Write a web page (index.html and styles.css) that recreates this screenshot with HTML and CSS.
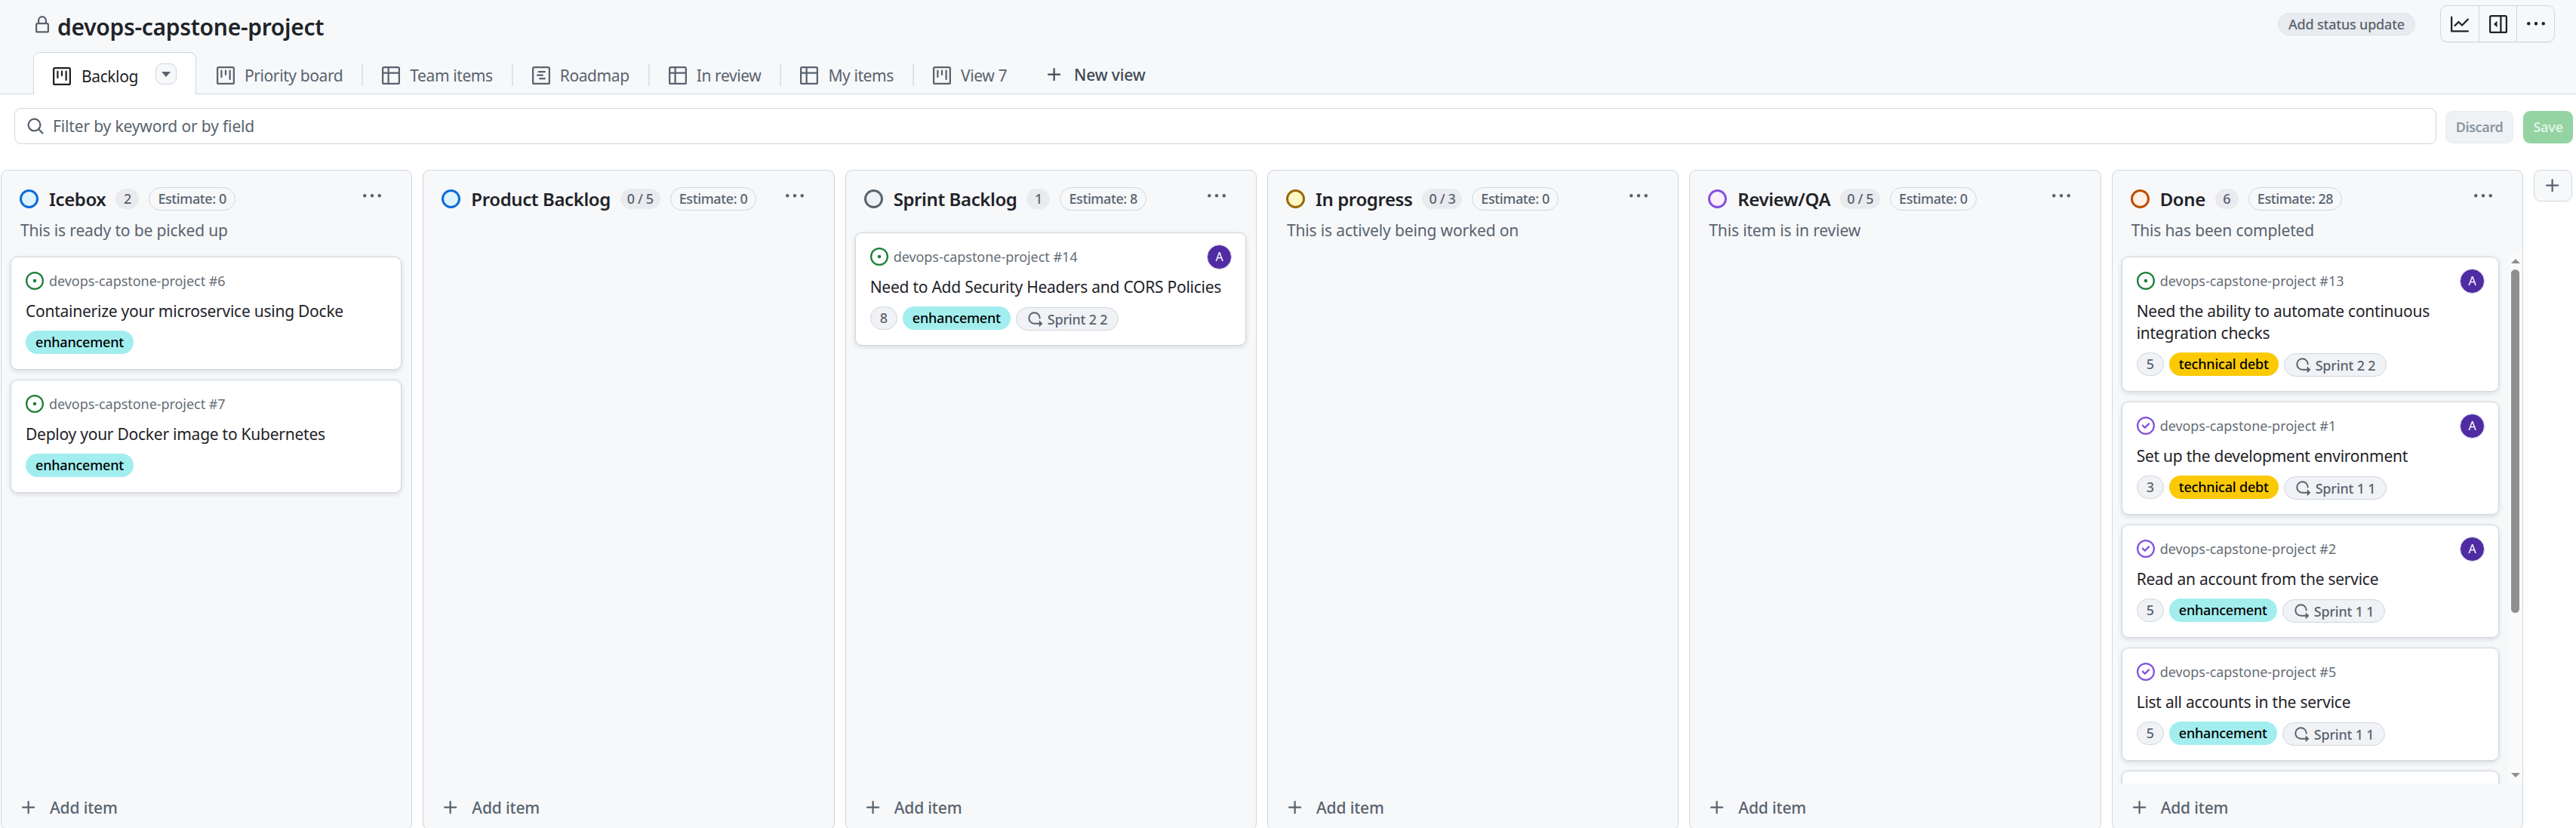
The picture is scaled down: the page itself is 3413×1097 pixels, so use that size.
FILE: index.html
```html
<!DOCTYPE html>
<html lang="en">
<head>
  <meta charset="UTF-8">
  <title>devops-capstone-project</title>
  <link rel="stylesheet" href="styles.css">
</head>
<body>

<svg class="sprite" xmlns="http://www.w3.org/2000/svg">
  <symbol id="i-lock" viewBox="0 0 16 16"><path d="M4 4a4 4 0 0 1 8 0v2h.25c.966 0 1.75.784 1.75 1.75v5.5A1.75 1.75 0 0 1 12.25 15h-8.5A1.75 1.75 0 0 1 2 13.25v-5.5C2 6.784 2.784 6 3.75 6H4Zm8.25 3.5h-8.5a.25.25 0 0 0-.25.25v5.5c0 .138.112.25.25.25h8.5a.25.25 0 0 0 .25-.25v-5.5a.25.25 0 0 0-.25-.25ZM10.5 6V4a2.5 2.5 0 1 0-5 0v2Z"/></symbol>
  <symbol id="i-board" viewBox="0 0 16 16"><path d="M1.75 0h12.5C15.216 0 16 .784 16 1.75v12.5A1.75 1.75 0 0 1 14.25 16H1.75A1.75 1.75 0 0 1 0 14.25V1.75C0 .784.784 0 1.75 0ZM1.5 1.75v12.5c0 .138.112.25.25.25h12.5a.25.25 0 0 0 .25-.25V1.75a.25.25 0 0 0-.25-.25H1.75a.25.25 0 0 0-.25.25ZM11.75 3a.75.75 0 0 1 .75.75v7.5a.75.75 0 0 1-1.5 0v-7.5a.75.75 0 0 1 .75-.75Zm-8.25.75a.75.75 0 0 1 1.5 0v5.5a.75.75 0 0 1-1.5 0ZM8 3a.75.75 0 0 1 .75.75v3.5a.75.75 0 0 1-1.5 0v-3.5A.75.75 0 0 1 8 3Z"/></symbol>
  <symbol id="i-table" viewBox="0 0 16 16"><path d="M0 1.75C0 .784.784 0 1.75 0h12.5C15.216 0 16 .784 16 1.75v12.5A1.75 1.75 0 0 1 14.25 16H1.75A1.75 1.75 0 0 1 0 14.25ZM6.5 6.5v8h7.75a.25.25 0 0 0 .25-.25V6.5Zm8-1.5V1.75a.25.25 0 0 0-.25-.25H6.5V5Zm-13 1.5v7.75c0 .138.112.25.25.25H5v-8ZM5 5V1.5H1.75a.25.25 0 0 0-.25.25V5Z"/></symbol>
  <symbol id="i-roadmap" viewBox="0 0 16 16"><path d="M4.75 7a.75.75 0 0 0 0 1.5h4.5a.75.75 0 0 0 0-1.5h-4.5ZM5 4.75A.75.75 0 0 1 5.75 4h5.5a.75.75 0 0 1 0 1.5h-5.5A.75.75 0 0 1 5 4.75ZM6.75 10a.75.75 0 0 0 0 1.5h4.5a.75.75 0 0 0 0-1.5h-4.5Z"/><path d="M0 1.75C0 .784.784 0 1.75 0h12.5C15.216 0 16 .784 16 1.75v12.5A1.75 1.75 0 0 1 14.25 16H1.75A1.75 1.75 0 0 1 0 14.25Zm1.75-.25a.25.25 0 0 0-.25.25v12.5c0 .138.112.25.25.25h12.5a.25.25 0 0 0 .25-.25V1.75a.25.25 0 0 0-.25-.25Z"/></symbol>
  <symbol id="i-search" viewBox="0 0 16 16"><path d="M10.68 11.74a6 6 0 0 1-7.922-8.982 6 6 0 0 1 8.982 7.922l3.04 3.04a.749.749 0 0 1-.326 1.275.749.749 0 0 1-.734-.215ZM11.5 7a4.499 4.499 0 1 0-8.997 0A4.499 4.499 0 0 0 11.5 7Z"/></symbol>
  <symbol id="i-plus" viewBox="0 0 16 16"><path d="M7.75 2a.75.75 0 0 1 .75.75V7h4.25a.75.75 0 0 1 0 1.5H8.5v4.25a.75.75 0 0 1-1.5 0V8.5H2.75a.75.75 0 0 1 0-1.5H7V2.75A.75.75 0 0 1 7.75 2Z"/></symbol>
  <symbol id="i-kebab" viewBox="0 0 16 16"><path d="M8 9a1.5 1.5 0 1 0 0-3 1.5 1.5 0 0 0 0 3ZM1.5 9a1.5 1.5 0 1 0 0-3 1.5 1.5 0 0 0 0 3Zm13 0a1.5 1.5 0 1 0 0-3 1.5 1.5 0 0 0 0 3Z"/></symbol>
  <symbol id="i-graph" viewBox="0 0 16 16"><path d="M1.5 1.75V13.5h13.75a.75.75 0 0 1 0 1.5H.75a.75.75 0 0 1-.75-.75V1.75a.75.75 0 0 1 1.5 0Zm14.28 2.53-5.25 5.25a.75.75 0 0 1-1.06 0L7 7.06 4.28 9.78a.751.751 0 0 1-1.042-.018.751.751 0 0 1-.018-1.042l3.25-3.25a.75.75 0 0 1 1.06 0L10 7.94l4.72-4.72a.751.751 0 0 1 1.042.018.751.751 0 0 1 .018 1.042Z"/></symbol>
  <symbol id="i-sidebar" viewBox="0 0 16 16"><path d="m4.177 7.823 2.396-2.396A.25.25 0 0 1 7 5.604v4.792a.25.25 0 0 1-.427.177L4.177 8.177a.25.25 0 0 1 0-.354Z"/><path d="M0 1.75C0 .784.784 0 1.75 0h12.5C15.216 0 16 .784 16 1.75v12.5A1.75 1.75 0 0 1 14.25 16H1.75A1.75 1.75 0 0 1 0 14.25Zm1.75-.25a.25.25 0 0 0-.25.25v12.5c0 .138.112.25.25.25H9.5v-13Zm12.5 13a.25.25 0 0 0 .25-.25V1.75a.25.25 0 0 0-.25-.25H11v13Z"/></symbol>
  <symbol id="i-open" viewBox="0 0 16 16"><path d="M8 9.5a1.5 1.5 0 1 0 0-3 1.5 1.5 0 0 0 0 3Z"/><path d="M8 0a8 8 0 1 1 0 16A8 8 0 0 1 8 0ZM1.5 8a6.5 6.5 0 1 0 13 0 6.5 6.5 0 0 0-13 0Z"/></symbol>
  <symbol id="i-closed" viewBox="0 0 16 16"><path d="M11.28 6.78a.75.75 0 0 0-1.06-1.06L7.25 8.69 5.78 7.22a.75.75 0 0 0-1.06 1.06l2 2a.75.75 0 0 0 1.06 0l3.5-3.5Z"/><path d="M16 8A8 8 0 1 1 0 8a8 8 0 0 1 16 0Zm-1.5 0a6.5 6.5 0 1 0-13 0 6.5 6.5 0 0 0 13 0Z"/></symbol>
  <symbol id="i-iteration" viewBox="0 0 16 16"><path d="M2.5 7.25a4.75 4.75 0 0 1 9.5 0 .75.75 0 0 0 1.5 0 6.25 6.25 0 1 0-6.25 6.25H12v2.146c0 .223.27.335.427.177l2.896-2.896a.25.25 0 0 0 0-.354l-2.896-2.896a.25.25 0 0 0-.427.177V12H7.25A4.75 4.75 0 0 1 2.5 7.25Z"/></symbol>
</svg>

<header class="page-head">
  <div class="title-row">
    <svg class="icon lock"><use href="#i-lock"/></svg>
    <h1>devops-capstone-project</h1>
    <button class="status-btn">Add status update</button>
    <div class="tool-group">
      <span class="tool"><svg class="icon"><use href="#i-graph"/></svg></span>
      <span class="tool"><svg class="icon"><use href="#i-sidebar"/></svg></span>
      <span class="tool"><svg class="icon"><use href="#i-kebab"/></svg></span>
    </div>
  </div>
  <nav class="tabs">
    <a class="tab active"><svg class="icon"><use href="#i-board"/></svg>Backlog<span class="tab-menu"><i class="caret"></i></span></a>
    <a class="tab"><svg class="icon"><use href="#i-board"/></svg>Priority board</a>
    <span class="tab-sep"></span>
    <a class="tab"><svg class="icon"><use href="#i-table"/></svg>Team items</a>
    <span class="tab-sep"></span>
    <a class="tab"><svg class="icon"><use href="#i-roadmap"/></svg>Roadmap</a>
    <span class="tab-sep"></span>
    <a class="tab"><svg class="icon"><use href="#i-table"/></svg>In review</a>
    <span class="tab-sep"></span>
    <a class="tab"><svg class="icon"><use href="#i-table"/></svg>My items</a>
    <span class="tab-sep"></span>
    <a class="tab"><svg class="icon"><use href="#i-board"/></svg>View 7</a>
    <a class="new-view"><svg class="icon"><use href="#i-plus"/></svg>New view</a>
  </nav>
</header>

<div class="filter-row">
  <div class="filter">
    <svg class="icon"><use href="#i-search"/></svg>
    <span>Filter by keyword or by field</span>
  </div>
  <button class="btn-discard">Discard</button>
  <button class="btn-save">Save</button>
</div>

<main class="board">

  <section class="column">
    <div class="col-head">
      <div class="col-title">
        <span class="dot blue"></span>
        <h2>Icebox</h2>
        <span class="count">2</span>
        <span class="estimate">Estimate: 0</span>
        <svg class="icon col-menu"><use href="#i-kebab"/></svg>
      </div>
      <p class="col-desc">This is ready to be picked up</p>
    </div>
    <div class="col-body">
      <div class="cards">
        <article class="card">
          <div class="card-top"><svg class="icon open"><use href="#i-open"/></svg><span>devops-capstone-project #6</span></div>
          <h3>Containerize your microservice using Docke</h3>
          <div class="tags"><span class="label enh">enhancement</span></div>
        </article>
        <article class="card">
          <div class="card-top"><svg class="icon open"><use href="#i-open"/></svg><span>devops-capstone-project #7</span></div>
          <h3>Deploy your Docker image to Kubernetes</h3>
          <div class="tags"><span class="label enh">enhancement</span></div>
        </article>
      </div>
    </div>
    <div class="add-item"><svg class="icon"><use href="#i-plus"/></svg>Add item</div>
  </section>

  <section class="column">
    <div class="col-head short">
      <div class="col-title">
        <span class="dot blue"></span>
        <h2>Product Backlog</h2>
        <span class="count">0 / 5</span>
        <span class="estimate">Estimate: 0</span>
        <svg class="icon col-menu"><use href="#i-kebab"/></svg>
      </div>
    </div>
    <div class="col-body"></div>
    <div class="add-item"><svg class="icon"><use href="#i-plus"/></svg>Add item</div>
  </section>

  <section class="column">
    <div class="col-head short">
      <div class="col-title">
        <span class="dot gray"></span>
        <h2>Sprint Backlog</h2>
        <span class="count">1</span>
        <span class="estimate">Estimate: 8</span>
        <svg class="icon col-menu"><use href="#i-kebab"/></svg>
      </div>
    </div>
    <div class="col-body">
      <div class="cards">
        <article class="card">
          <div class="card-top"><svg class="icon open"><use href="#i-open"/></svg><span>devops-capstone-project #14</span><b class="avatar">A</b></div>
          <h3>Need to Add Security Headers and CORS Policies</h3>
          <div class="tags">
            <span class="points">8</span>
            <span class="label enh">enhancement</span>
            <span class="sprint"><svg class="icon"><use href="#i-iteration"/></svg>Sprint 2 2</span>
          </div>
        </article>
      </div>
    </div>
    <div class="add-item"><svg class="icon"><use href="#i-plus"/></svg>Add item</div>
  </section>

  <section class="column">
    <div class="col-head">
      <div class="col-title">
        <span class="dot yellow"></span>
        <h2>In progress</h2>
        <span class="count">0 / 3</span>
        <span class="estimate">Estimate: 0</span>
        <svg class="icon col-menu"><use href="#i-kebab"/></svg>
      </div>
      <p class="col-desc">This is actively being worked on</p>
    </div>
    <div class="col-body"></div>
    <div class="add-item"><svg class="icon"><use href="#i-plus"/></svg>Add item</div>
  </section>

  <section class="column">
    <div class="col-head">
      <div class="col-title">
        <span class="dot purple"></span>
        <h2>Review/QA</h2>
        <span class="count">0 / 5</span>
        <span class="estimate">Estimate: 0</span>
        <svg class="icon col-menu"><use href="#i-kebab"/></svg>
      </div>
      <p class="col-desc">This item is in review</p>
    </div>
    <div class="col-body"></div>
    <div class="add-item"><svg class="icon"><use href="#i-plus"/></svg>Add item</div>
  </section>

  <section class="column">
    <div class="col-head">
      <div class="col-title">
        <span class="dot orange"></span>
        <h2>Done</h2>
        <span class="count">6</span>
        <span class="estimate">Estimate: 28</span>
        <svg class="icon col-menu"><use href="#i-kebab"/></svg>
      </div>
      <p class="col-desc">This has been completed</p>
    </div>
    <div class="col-body">
      <div class="cards">
        <article class="card">
          <div class="card-top"><svg class="icon open"><use href="#i-open"/></svg><span>devops-capstone-project #13</span><b class="avatar">A</b></div>
          <h3>Need the ability to automate continuous integration checks</h3>
          <div class="tags">
            <span class="points">5</span>
            <span class="label debt">technical debt</span>
            <span class="sprint"><svg class="icon"><use href="#i-iteration"/></svg>Sprint 2 2</span>
          </div>
        </article>
        <article class="card">
          <div class="card-top"><svg class="icon closed"><use href="#i-closed"/></svg><span>devops-capstone-project #1</span><b class="avatar">A</b></div>
          <h3>Set up the development environment</h3>
          <div class="tags">
            <span class="points">3</span>
            <span class="label debt">technical debt</span>
            <span class="sprint"><svg class="icon"><use href="#i-iteration"/></svg>Sprint 1 1</span>
          </div>
        </article>
        <article class="card">
          <div class="card-top"><svg class="icon closed"><use href="#i-closed"/></svg><span>devops-capstone-project #2</span><b class="avatar">A</b></div>
          <h3>Read an account from the service</h3>
          <div class="tags">
            <span class="points">5</span>
            <span class="label enh">enhancement</span>
            <span class="sprint"><svg class="icon"><use href="#i-iteration"/></svg>Sprint 1 1</span>
          </div>
        </article>
        <article class="card">
          <div class="card-top"><svg class="icon closed"><use href="#i-closed"/></svg><span>devops-capstone-project #5</span></div>
          <h3>List all accounts in the service</h3>
          <div class="tags">
            <span class="points">5</span>
            <span class="label enh">enhancement</span>
            <span class="sprint"><svg class="icon"><use href="#i-iteration"/></svg>Sprint 1 1</span>
          </div>
        </article>
        <article class="card card-cut"></article>
      </div>
      <div class="scrollbar">
        <i class="arrow-up"></i>
        <span class="thumb"></span>
        <i class="arrow-down"></i>
      </div>
    </div>
    <div class="add-item"><svg class="icon"><use href="#i-plus"/></svg>Add item</div>
  </section>

  <button class="add-col"><svg class="icon"><use href="#i-plus"/></svg></button>

</main>

</body>
</html>
```

FILE: styles.css
```css
* {
  box-sizing: border-box;
}
html, body {
  height: 100%;
}
body {
  margin: 0;
  overflow: hidden;
  background-color: #fff;
  color: #1f2328;
  font-family: "Noto Sans", sans-serif;
  font-size: 21px;
  letter-spacing: -0.15px;
}
button {
  font-family: inherit;
  letter-spacing: -0.4px;
}
h1, h2, h3, p {
  margin: 0;
}
.sprite {
  display: none;
}
.icon {
  width: 24px;
  height: 24px;
  flex-shrink: 0;
  fill: currentColor;
}

/* header */
.page-head {
  height: 125px;
  background-color: #f6f8fa;
  border-bottom: 1px solid #d0d7de;
}
.title-row {
  display: flex;
  align-items: center;
  height: 69px;
  padding: 7px 28px 13px 44px;
}
.lock {
  width: 24px;
  height: 24px;
  color: #59636e;
  margin: 3px 8px 0 0;
}
h1 {
  font-size: 30px;
  font-weight: 600;
  line-height: 44px;
  margin-top: 9px;
  letter-spacing: -0.3px;
}
.status-btn {
  margin-left: auto;
  height: 30px;
  padding: 0 13px;
  border: 1px solid #dfe3e8;
  border-radius: 15px;
  background-color: #e8ebef;
  color: #59636e;
  font-size: 18px;
  font-weight: 500;
  letter-spacing: -0.2px;
}
.tool-group {
  display: flex;
  margin-left: 33px;
  height: 49px;
  border: 1px solid #d0d7de;
  border-radius: 9px;
  box-shadow: 0 1px 0 rgba(31, 35, 40, 0.05);
}
.tool {
  display: flex;
  align-items: center;
  justify-content: center;
  width: 50px;
  border-left: 1px solid #d0d7de;
}
.tool:first-child {
  border-left: none;
}

/* view tabs */
.tabs {
  display: flex;
  align-items: center;
  height: 55px;
  margin-left: 44px;
}
.tab {
  display: flex;
  align-items: center;
  gap: 13px;
  height: 100%;
  padding: 6px 25px 0;
  color: #59636e;
  letter-spacing: -0.4px;
}
.tab.active {
  gap: 14px;
  height: 56px;
  margin: 1px 2px 0 0;
  background-color: #fff;
  color: #1f2328;
  border: 1px solid #d0d7de;
  border-bottom: none;
  border-radius: 9px 9px 0 0;
}
.tab-sep {
  width: 2px;
  height: 30px;
  margin-top: 4px;
  background-color: #dfe3e8;
}
.tab-menu {
  display: flex;
  align-items: center;
  justify-content: center;
  width: 28px;
  height: 28px;
  margin: -5px 0 0 9px;
  border: 1px solid #d0d7de;
  border-radius: 9px;
  background-color: #f6f8fa;
}
.caret {
  border-top: 7px solid #59636e;
  border-left: 6px solid transparent;
  border-right: 6px solid transparent;
}
.new-view {
  display: flex;
  align-items: center;
  gap: 14px;
  margin: 4px 0 0 26px;
  color: #424a53;
  font-weight: 500;
}

/* filter bar */
.filter-row {
  display: flex;
  align-items: center;
  height: 100px;
  padding: 0 4px 17px 19px;
}
.filter {
  display: flex;
  align-items: center;
  gap: 11px;
  flex: 1;
  height: 48px;
  padding-left: 15px;
  border: 1px solid #d0d7de;
  border-radius: 9px;
  color: #59636e;
}
.btn-discard, .btn-save {
  height: 43px;
  margin-top: 3px;
  border-radius: 9px;
  font-size: 18px;
  font-weight: 600;
}
.btn-discard {
  width: 90px;
  margin-left: 12px;
  border: 1px solid #e7eaee;
  background-color: #eff2f5;
  color: #8c959f;
}
.btn-save {
  width: 66px;
  margin-left: 13px;
  border: none;
  background-color: #94d3a2;
  color: #dff3e4;
}

/* board */
.board {
  display: flex;
  gap: 14px;
  padding-left: 1px;
  height: 875px;
}
.column {
  display: flex;
  flex-direction: column;
  flex: 1;
  min-width: 0;
  background-color: #f6f8fa;
  border: 1px solid #d0d7de;
  border-radius: 9px;
}
.col-head {
  height: 108px;
  padding: 22px 25px 0 24px;
}
.col-head.short {
  height: 76px;
}
.col-title {
  display: flex;
  align-items: center;
  height: 31px;
}
.dot {
  width: 25px;
  height: 25px;
  flex-shrink: 0;
  margin-right: 14px;
  border: 3px solid;
  border-radius: 50%;
}
.dot.blue { border-color: #0969da; background-color: #ddf4ff; }
.dot.gray { border-color: #59636e; background-color: #eff2f5; }
.dot.yellow { border-color: #9a6700; background-color: #fff8c5; }
.dot.purple { border-color: #8250df; background-color: #fbefff; }
.dot.orange { border-color: #bc4c00; background-color: #fff1e5; }
h2 {
  font-size: 24px;
  font-weight: 600;
  letter-spacing: -0.4px;
  white-space: nowrap;
}
.count {
  height: 27px;
  min-width: 31px;
  margin-left: 13px;
  padding: 0 9px;
  border-radius: 14px;
  background-color: #e9ebef;
  color: #59636e;
  font-size: 18px;
  font-weight: 500;
  letter-spacing: -0.4px;
  line-height: 27px;
  text-align: center;
  white-space: nowrap;
}
.estimate {
  height: 31px;
  margin-left: 13px;
  padding: 0 11px;
  border: 1px solid #d0d7de;
  border-radius: 16px;
  color: #59636e;
  font-size: 18px;
  font-weight: 500;
  letter-spacing: -0.4px;
  line-height: 29px;
  white-space: nowrap;
}
.col-menu {
  margin: -8px 15px 0 auto;
  color: #59636e;
}
.col-desc {
  margin-top: 11px;
  padding-left: 1px;
  color: #59636e;
  line-height: 30px;
}
.col-body {
  display: flex;
  flex: 1;
  min-height: 0;
}
.cards {
  display: flex;
  flex-direction: column;
  gap: 13px;
  flex: 1;
  min-width: 0;
  padding: 6px 13px 0 12px;
  overflow: hidden;
}
.card {
  flex-shrink: 0;
  padding: 19px 19px 20px;
  background-color: #fff;
  border: 1px solid #d0d7de;
  border-radius: 9px;
  box-shadow: 0 2px 6px rgba(31, 35, 40, 0.14);
}
.card-cut {
  height: 150px;
}
.card-top {
  display: flex;
  align-items: center;
  gap: 7px;
  height: 24px;
  color: #656d76;
  font-size: 18px;
  letter-spacing: -0.05px;
}
.card-top .open { color: #1a7f37; }
.card-top .closed { color: #8250df; }
.avatar {
  display: flex;
  align-items: center;
  justify-content: center;
  width: 33px;
  height: 33px;
  margin: 0 -1px 0 auto;
  border: 1px solid #d8d8e6;
  border-radius: 50%;
  background-color: #4f2ca3;
  color: #fff;
  font-size: 16px;
  font-weight: 400;
}
h3 {
  margin-top: 14px;
  font-size: 21px;
  font-weight: 400;
  letter-spacing: -0.25px;
  line-height: 29px;
}
.tags {
  display: flex;
  align-items: center;
  gap: 7px;
  margin-top: 10px;
  height: 32px;
  font-size: 18px;
  font-weight: 500;
  letter-spacing: -0.2px;
}
.points {
  height: 31px;
  padding: 0 12px;
  border: 1px solid #d0d7de;
  border-radius: 16px;
  background-color: #f0f2f5;
  color: #59636e;
  line-height: 29px;
}
.label {
  height: 31px;
  padding: 0 13px;
  border-radius: 16px;
  color: #000;
  line-height: 31px;
}
.label.enh { background-color: #a2eeef; }
.label.debt { background-color: #fbca04; }
.sprint {
  display: flex;
  align-items: center;
  gap: 6px;
  height: 31px;
  margin-top: 3px;
  padding: 0 14px;
  border: 1px solid #d0d7de;
  border-radius: 16px;
  background-color: #f0f2f5;
  color: #59636e;
}
.sprint .icon {
  width: 21px;
  height: 21px;
}

/* drawn scrollbar of the Done column */
.scrollbar {
  display: flex;
  flex-direction: column;
  align-items: center;
  flex-shrink: 0;
  width: 18px;
  padding: 9px 0 8px;
  background-color: #fafafa;
}
.arrow-up, .arrow-down {
  border-left: 6px solid transparent;
  border-right: 6px solid transparent;
}
.arrow-up {
  border-bottom: 6px solid #8f8f8f;
}
.arrow-down {
  border-top: 6px solid #8f8f8f;
}
.thumb {
  width: 11px;
  height: 455px;
  margin: 8px 0 auto;
  border-radius: 6px;
  background-color: #8f8f8f;
}

.add-item {
  display: flex;
  align-items: center;
  gap: 16px;
  flex-shrink: 0;
  height: 61px;
  padding: 2px 0 0 24px;
  color: #59636e;
  font-weight: 500;
}
.add-col {
  display: flex;
  align-items: center;
  justify-content: center;
  flex-shrink: 0;
  width: 51px;
  height: 42px;
  padding: 0;
  margin-right: 5px;
  border: 1px solid #d0d7de;
  border-radius: 9px;
  background-color: #f6f8fa;
  color: #59636e;
}
```
